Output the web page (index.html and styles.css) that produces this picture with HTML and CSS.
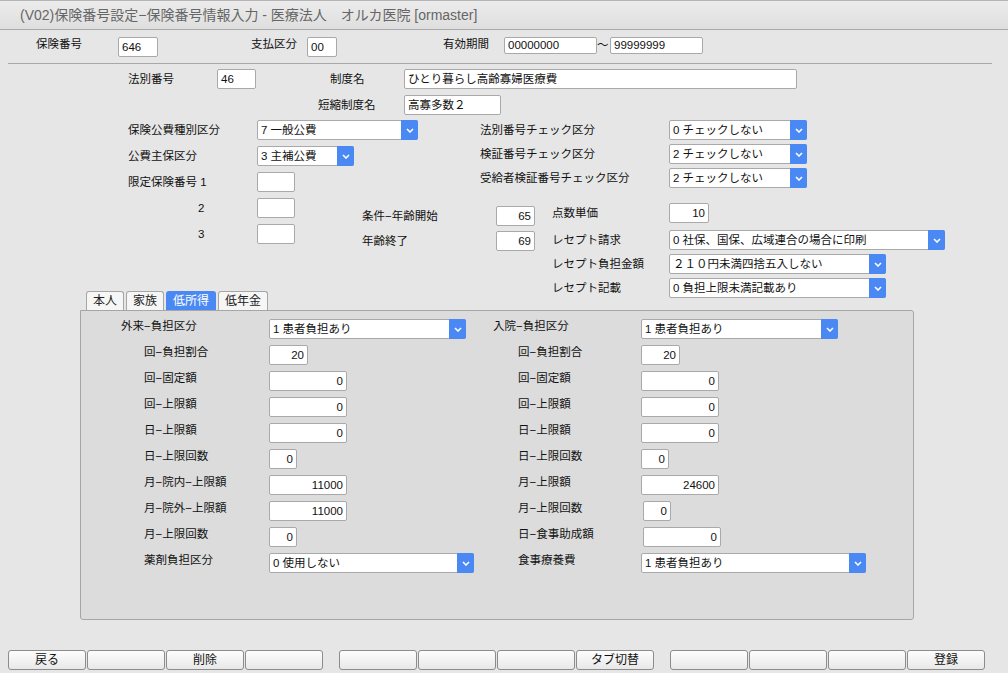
FILE: index.html
```html
<!DOCTYPE html>
<html lang="ja">
<head>
<meta charset="utf-8">
<title>保険番号設定</title>
<link rel="stylesheet" href="styles.css">
</head>
<body>
<div class="titlebar">(V02)保険番号設定−保険番号情報入力 - 医療法人　オルカ医院 [ormaster]</div>

<div class="row1">
  <span class="lbl">保険番号</span><div class="fld w40">646</div>
  <span class="lbl">支払区分</span><div class="fld w30">00</div>
  <span class="lbl">有効期間</span><div class="fld w93 h17">00000000</div>
  <span class="tilde">～</span><div class="fld w93 h17">99999999</div>
</div>

<div class="sep"></div>

<div class="secB">
  <span class="lbl">法別番号</span><div class="fld w39">46</div>
  <span class="lbl seido">制度名</span><div class="fld w393">ひとり暮らし高齢寡婦医療費</div>
  <span class="lbl tanshuku">短縮制度名</span><div class="fld w97">高寡多数２</div>
</div>

<div class="secC">
  <div class="colL">
    <div class="gridL">
      <span class="lbl">保険公費種別区分</span>
      <div class="sel w161 h21"><span class="txt">7 一般公費</span><span class="arrow"><svg width="8" height="5" viewBox="0 0 8 5"><path d="M1 1l3 3 3-3" fill="none" stroke="#fff" stroke-width="1.6"/></svg></span></div>
      <span class="lbl">公費主保区分</span>
      <div class="sel w97 h21"><span class="txt">3 主補公費</span><span class="arrow"><svg width="8" height="5" viewBox="0 0 8 5"><path d="M1 1l3 3 3-3" fill="none" stroke="#fff" stroke-width="1.6"/></svg></span></div>
      <span class="lbl">限定保険番号 1</span><div class="fld w38"></div>
      <span class="lbl sub">2</span><div class="fld w38"></div>
      <span class="lbl sub">3</span><div class="fld w38"></div>
    </div>
    <div class="tabs">
      <div class="tab t38">本人</div>
      <div class="tab t38">家族</div>
      <div class="tab t50 active">低所得</div>
      <div class="tab t50">低年金</div>
    </div>
  </div>

  <div class="colR">
    <div class="checks">
      <span class="lbl">法別番号チェック区分</span>
      <div class="sel w138"><span class="txt">0 チェックしない</span><span class="arrow"><svg width="8" height="5" viewBox="0 0 8 5"><path d="M1 1l3 3 3-3" fill="none" stroke="#fff" stroke-width="1.6"/></svg></span></div>
      <span class="lbl">検証番号チェック区分</span>
      <div class="sel w138"><span class="txt">2 チェックしない</span><span class="arrow"><svg width="8" height="5" viewBox="0 0 8 5"><path d="M1 1l3 3 3-3" fill="none" stroke="#fff" stroke-width="1.6"/></svg></span></div>
      <span class="lbl">受給者検証番号チェック区分</span>
      <div class="sel w138"><span class="txt">2 チェックしない</span><span class="arrow"><svg width="8" height="5" viewBox="0 0 8 5"><path d="M1 1l3 3 3-3" fill="none" stroke="#fff" stroke-width="1.6"/></svg></span></div>
    </div>
    <div class="lower">
      <div class="ages">
        <span class="lbl">条件−年齢開始</span><div class="fld w39 num">65</div>
        <span class="lbl">年齢終了</span><div class="fld w39 num">69</div>
      </div>
      <div class="rece">
        <span class="lbl">点数単価</span><div class="fld w40 num">10</div>
        <span class="lbl">レセプト請求</span>
        <div class="sel w276"><span class="txt">0 社保、国保、広域連合の場合に印刷</span><span class="arrow"><svg width="8" height="5" viewBox="0 0 8 5"><path d="M1 1l3 3 3-3" fill="none" stroke="#fff" stroke-width="1.6"/></svg></span></div>
        <span class="lbl">レセプト負担金額</span>
        <div class="sel w217"><span class="txt">２１０円未満四捨五入しない</span><span class="arrow"><svg width="8" height="5" viewBox="0 0 8 5"><path d="M1 1l3 3 3-3" fill="none" stroke="#fff" stroke-width="1.6"/></svg></span></div>
        <span class="lbl">レセプト記載</span>
        <div class="sel w217"><span class="txt">0 負担上限未満記載あり</span><span class="arrow"><svg width="8" height="5" viewBox="0 0 8 5"><path d="M1 1l3 3 3-3" fill="none" stroke="#fff" stroke-width="1.6"/></svg></span></div>
      </div>
    </div>
  </div>
</div>

<div class="panel">
  <div class="pcol pcol-l">
    <span class="lbl">外来−負担区分</span>
    <div class="sel w197 h21"><span class="txt">1 患者負担あり</span><span class="arrow"><svg width="8" height="5" viewBox="0 0 8 5"><path d="M1 1l3 3 3-3" fill="none" stroke="#fff" stroke-width="1.6"/></svg></span></div>
    <span class="lbl ind">回−負担割合</span><div class="fld w39 num">20</div>
    <span class="lbl ind">回−固定額</span><div class="fld w78 num">0</div>
    <span class="lbl ind">回−上限額</span><div class="fld w78 num">0</div>
    <span class="lbl ind">日−上限額</span><div class="fld w78 num">0</div>
    <span class="lbl ind">日−上限回数</span><div class="fld w28 num">0</div>
    <span class="lbl ind">月−院内−上限額</span><div class="fld w78 num">11000</div>
    <span class="lbl ind">月−院外−上限額</span><div class="fld w78 num">11000</div>
    <span class="lbl ind">月−上限回数</span><div class="fld w28 num">0</div>
    <span class="lbl ind">薬剤負担区分</span>
    <div class="sel w205"><span class="txt">0 使用しない</span><span class="arrow"><svg width="8" height="5" viewBox="0 0 8 5"><path d="M1 1l3 3 3-3" fill="none" stroke="#fff" stroke-width="1.6"/></svg></span></div>
  </div>
  <div class="pcol pcol-r">
    <span class="lbl">入院−負担区分</span>
    <div class="sel w197"><span class="txt">1 患者負担あり</span><span class="arrow"><svg width="8" height="5" viewBox="0 0 8 5"><path d="M1 1l3 3 3-3" fill="none" stroke="#fff" stroke-width="1.6"/></svg></span></div>
    <span class="lbl ind">回−負担割合</span><div class="fld w39 num">20</div>
    <span class="lbl ind">回−固定額</span><div class="fld w78 num">0</div>
    <span class="lbl ind">回−上限額</span><div class="fld w78 num">0</div>
    <span class="lbl ind">日−上限額</span><div class="fld w78 num">0</div>
    <span class="lbl ind">日−上限回数</span><div class="fld w28 num">0</div>
    <span class="lbl ind">月−上限額</span><div class="fld w78 num">24600</div>
    <span class="lbl ind">月−上限回数</span><div class="fld w28 num shift">0</div>
    <span class="lbl ind">日−食事助成額</span><div class="fld w78 num shift">0</div>
    <span class="lbl ind">食事療養費</span>
    <div class="sel w225"><span class="txt">1 患者負担あり</span><span class="arrow"><svg width="8" height="5" viewBox="0 0 8 5"><path d="M1 1l3 3 3-3" fill="none" stroke="#fff" stroke-width="1.6"/></svg></span></div>
  </div>
</div>

<div class="buttons">
  <div class="bgrp">
    <div class="btn">戻る</div><div class="btn"></div><div class="btn">削除</div><div class="btn"></div>
  </div>
  <div class="bgrp">
    <div class="btn"></div><div class="btn"></div><div class="btn"></div><div class="btn">タブ切替</div>
  </div>
  <div class="bgrp">
    <div class="btn"></div><div class="btn"></div><div class="btn"></div><div class="btn">登録</div>
  </div>
</div>
</body>
</html>
```

FILE: styles.css
```css
* { box-sizing: border-box; margin: 0; padding: 0; }
html, body { background: #e6e6e6; }
body {
  width: 1008px;
  height: 673px;
  overflow: hidden;
  font-family: "Liberation Sans", "Noto Sans CJK JP", sans-serif;
  font-size: 11.5px;
  line-height: 14px;
  color: #111;
}

.titlebar {
  height: 30px;
  border-top: 1px solid #b4b4b4;
  border-bottom: 1px solid #a9a9a9;
  background: linear-gradient(#ececec, #dedede);
  padding-left: 20px;
  font-size: 14px;
  line-height: 28px;
  color: #666;
  white-space: nowrap;
}

.lbl { white-space: nowrap; }

.fld {
  height: 20px;
  background: #fff;
  border: 1px solid #a9a9a9;
  border-radius: 2px;
  padding: 0 3px;
  line-height: 18px;
  white-space: nowrap;
  overflow: hidden;
}
.num { text-align: right; }
.h17 { height: 17px; line-height: 15px; }
.h21 { height: 21px; }

.sel {
  display: flex;
  height: 20px;
  background: #fff;
  border: 1px solid #a9a9a9;
  border-radius: 2px;
  line-height: 18px;
  white-space: nowrap;
}
.sel.h21 { line-height: 19px; }
.sel .txt { flex: 1; padding-left: 3px; overflow: hidden; }
.sel .arrow {
  width: 17px;
  margin: -1px -1px -1px 0;
  background: #4a89f3;
  border-radius: 0 2px 2px 0;
  display: flex;
  align-items: center;
  justify-content: center;
}

.w28 { width: 28px; }
.w30 { width: 30px; }
.w38 { width: 38px; }
.w39 { width: 39px; }
.w40 { width: 40px; }
.w78 { width: 78px; }
.w93 { width: 93px; }
.w97 { width: 97px; }
.w138 { width: 138px; }
.w161 { width: 161px; }
.w197 { width: 197px; }
.w205 { width: 205px; }
.w217 { width: 217px; }
.w225 { width: 225px; }
.w276 { width: 276px; }
.w393 { width: 393px; }

/* top row */
.row1 {
  display: grid;
  grid-template-columns: 82px 133px 56px 136px 61px 93px 13px 93px;
  align-items: start;
  padding-left: 36px;
  margin-top: 7px;
  height: 20px;
}
.tilde { font-size: 11.5px; line-height: 17px; }

.sep {
  margin: 6px 0 5px 8px;
  width: 984px;
  height: 1px;
  background: #a8a8a8;
}

/* section B */
.secB {
  display: grid;
  grid-template-columns: 89px 101px 12px 74px auto;
  grid-auto-rows: 20px;
  row-gap: 6px;
  align-items: center;
  padding-left: 128px;
}
.secB .seido { grid-column: 4; }
.secB .tanshuku { grid-column: 3 / span 2; }

/* section C */
.secC { display: flex; margin-top: 5px; padding-left: 80px; }
.colL { width: 282px; }
.gridL {
  display: grid;
  grid-template-columns: 129px auto;
  grid-auto-rows: 26px;
  align-items: start;
  padding-left: 48px;
}
.gridL .lbl { line-height: 20px; }
.gridL .sub { padding-left: 70px; }

.tabs { display: flex; gap: 2px; margin: 41px 0 0 6px; }
.tab {
  height: 19px;
  border: 1px solid #a6a6a6;
  border-bottom: none;
  border-radius: 3px 3px 0 0;
  background: #f6f6f6;
  text-align: center;
  line-height: 18px;
  font-size: 12px;
  color: #222;
}
.t38 { width: 38px; }
.t50 { width: 50px; }
.tab.active { background: #4a89f3; border-color: #4a89f3; color: #fff; }

.checks {
  display: grid;
  grid-template-columns: 189px auto;
  grid-auto-rows: 24px;
  align-items: start;
  padding-left: 118px;
}
.checks .lbl { line-height: 20px; }

.lower { display: flex; align-items: flex-start; }
.ages {
  margin-top: 14px;
  width: 174px;
  display: grid;
  grid-template-columns: 134px 39px;
  grid-auto-rows: 25px;
  align-items: start;
}
.ages .lbl { line-height: 20px; }
.rece {
  margin: 11px 0 0 16px;
  display: grid;
  grid-template-columns: 117px auto;
  grid-template-rows: 27px 24px 24px 20px;
  align-items: start;
}
.rece .lbl { line-height: 20px; }

/* tab panel */
.panel {
  margin-left: 80px;
  width: 834px;
  height: 310px;
  padding-top: 8px;
  border: 1px solid #a6a6a6;
  border-radius: 0 3px 3px 3px;
  background: #dcdcdc;
  display: flex;
}
.pcol {
  display: grid;
  grid-template-columns: 148px auto;
  grid-auto-rows: 26px;
  align-items: start;
  align-content: start;
}
.pcol .lbl { line-height: 14px; }
.pcol-l { margin-left: 40px; width: 372px; }
.pcol-l .ind { padding-left: 23px; }
.pcol-r { width: 380px; }
.pcol-r .ind { padding-left: 25px; }
.shift { margin-left: 2px; }

/* bottom buttons */
.buttons { display: flex; gap: 16px; margin-top: 30px; padding-left: 8px; }
.bgrp { display: flex; gap: 1px; }
.btn {
  width: 78px;
  height: 20px;
  border: 1px solid #8c8c8c;
  border-radius: 3px;
  background: linear-gradient(#fdfdfd, #e8e8e8);
  text-align: center;
  line-height: 18px;
  font-size: 12px;
  color: #111;
}
```
